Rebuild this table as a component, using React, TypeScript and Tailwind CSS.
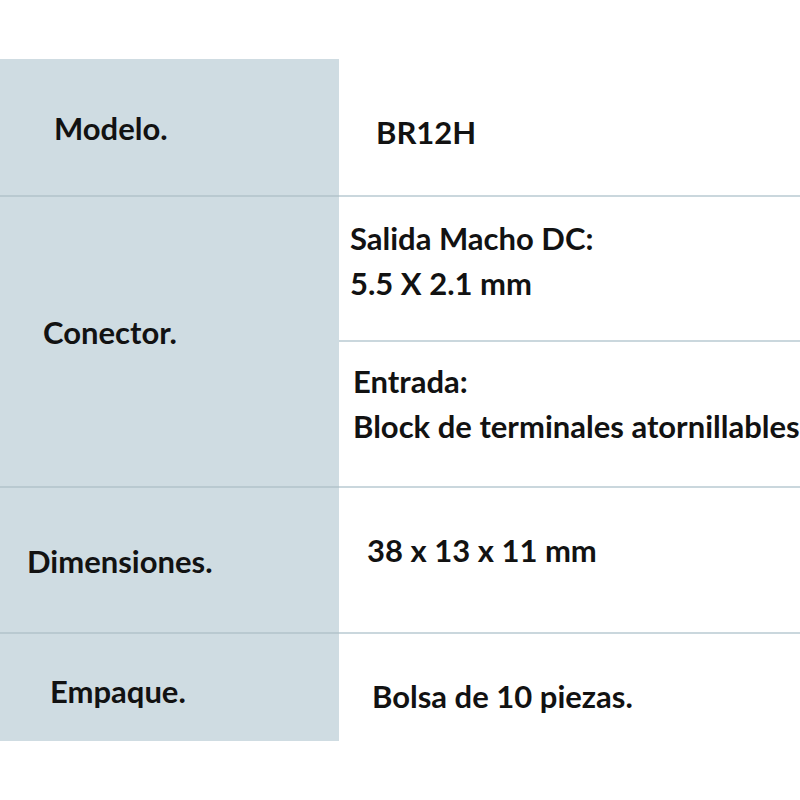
export default function App() {
    return (
        <div
            className="w-[800px] h-[800px] bg-white pt-[59px] text-[#121212] font-bold text-[31px] leading-[45px]"
            style={{ fontFamily: 'Lato, "Open Sans", sans-serif' }}
        >
            {/* Modelo */}
            <div className="flex h-[138px]">
                <div className="w-[339px] bg-[#cfdce2] border-b-2 border-[#b9c9d0] pl-[54px] pt-[47px]">Modelo.</div>
                <div className="flex-1 border-b-2 border-[#cad7dd] pl-[37px] pt-[51px]">BR12H</div>
            </div>

            {/* Conector */}
            <div className="flex h-[291px]">
                <div className="w-[339px] bg-[#cfdce2] border-b-2 border-[#b9c9d0] pl-[43px] pt-[113px]">Conector.</div>
                <div className="flex-1 flex flex-col">
                    <div className="h-[145px] border-b-2 border-[#cad7dd] pl-[11px] pt-[19px]">
                        <p>Salida Macho DC:</p>
                        <p>5.5 X 2.1 mm</p>
                    </div>
                    <div className="flex-1 border-b-2 border-[#cad7dd] pl-[14px] pt-[17px] whitespace-nowrap overflow-hidden">
                        <p>Entrada:</p>
                        <p>Block de terminales atornillables</p>
                    </div>
                </div>
            </div>

            {/* Dimensiones */}
            <div className="flex h-[146px]">
                <div className="w-[339px] bg-[#cfdce2] border-b-2 border-[#b9c9d0] pl-[27px] pt-[51px]">Dimensiones.</div>
                <div className="flex-1 border-b-2 border-[#cad7dd] pl-[28px] pt-[40px]">38 x 13 x 11 mm</div>
            </div>

            {/* Empaque */}
            <div className="flex h-[107px]">
                <div className="w-[339px] bg-[#cfdce2] pl-[50px] pt-[35px]">Empaque.</div>
                <div className="flex-1 pl-[33px] pt-[40px]">Bolsa de 10 piezas.</div>
            </div>
        </div>
    );
}
